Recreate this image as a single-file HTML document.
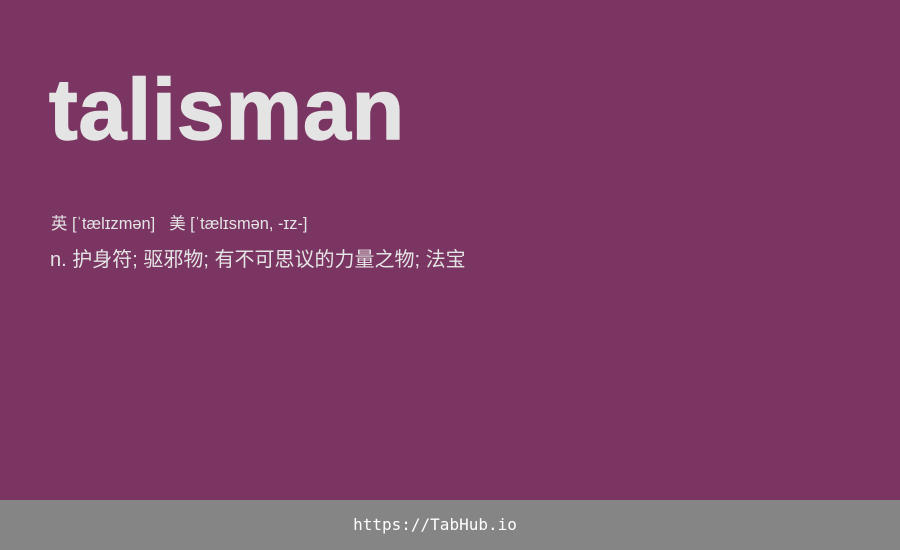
<!DOCTYPE html>
<html><head><meta charset="utf-8"><style>
html,body{margin:0;padding:0;}
body{width:900px;height:550px;background:#7b3562;position:relative;overflow:hidden;font-family:"Liberation Sans","Noto Sans CJK SC",sans-serif;color:#e4e4e4;}
.t{position:absolute;left:49px;top:60px;font-size:86px;font-weight:bold;line-height:100px;letter-spacing:0.9px;-webkit-text-stroke:1.5px #e4e4e4;}
.p{position:absolute;left:51px;top:214px;font-size:16.4px;line-height:20px;}
.p span{display:inline-block;width:14px;}
.d{position:absolute;left:50px;top:248px;font-size:20px;line-height:24px;}
.f{position:absolute;left:0;top:500px;width:870px;height:50px;padding-right:30px;background:#858585;color:#fff;font-family:"DejaVu Sans Mono",monospace;font-size:16px;line-height:50px;text-align:center;}
</style></head><body>
<div class="t">talisman</div>
<div class="p">英 [ˈtælɪzmən]<span></span>美 [ˈtælɪsmən, -ɪz-]</div>
<div class="d">n. 护身符; 驱邪物; 有不可思议的力量之物; 法宝</div>
<div class="f">https://TabHub.io</div>
</body></html>
